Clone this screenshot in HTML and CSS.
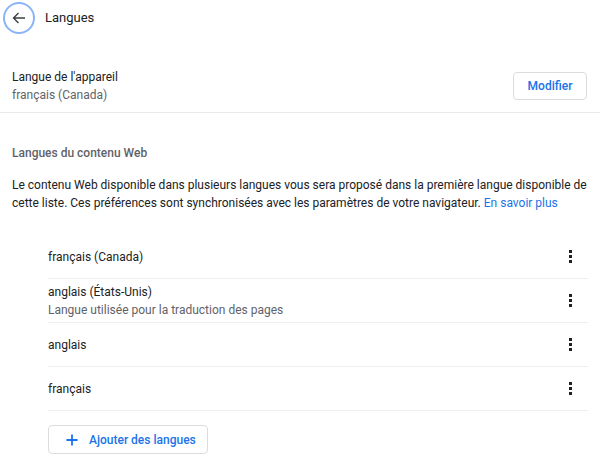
FILE: index.html
```html
<!DOCTYPE html>
<html lang="fr">

<head>
    <meta charset="UTF-8">
    <meta name="viewport" content="width=device-width, initial-scale=1.0">
    <title>Langues</title>
    <link rel="stylesheet" href="styles.css">
</head>

<body>
    <div class="header">
        <button class="backBtn" aria-label="Retour">
            <svg width="16" height="16" viewBox="0 0 16 16">
                <path d="M14 8H2.5M7.5 3L2.5 8l5 5" fill="none" stroke="#3c4043" stroke-width="1.4"></path>
            </svg>
        </button>
        <span class="title">Langues</span>
    </div>

    <div class="deviceRow">
        <div class="deviceText">
            <div class="primary">Langue de l'appareil</div>
            <div class="secondary">français (Canada)</div>
        </div>
        <button class="btn">Modifier</button>
    </div>

    <div class="section">
        <h2 class="sectionTitle">Langues du contenu Web</h2>
        <p class="desc">
            Le contenu Web disponible dans plusieurs langues vous sera proposé dans la première langue disponible de
            cette liste. Ces préférences sont synchronisées avec les paramètres de votre navigateur.
            <a href="" class="link">En savoir plus</a>
        </p>

        <ul class="langList">
            <li class="langItem">
                <div class="primary">français (Canada)</div>
                <span class="more"><i></i><i></i><i></i></span>
            </li>
            <li class="langItem">
                <div>
                    <div class="primary">anglais (États-Unis)</div>
                    <div class="secondary">Langue utilisée pour la traduction des pages</div>
                </div>
                <span class="more"><i></i><i></i><i></i></span>
            </li>
            <li class="langItem">
                <div class="primary">anglais</div>
                <span class="more"><i></i><i></i><i></i></span>
            </li>
            <li class="langItem">
                <div class="primary">français</div>
                <span class="more"><i></i><i></i><i></i></span>
            </li>
        </ul>

        <button class="btn addBtn">
            <svg class="plus" width="12" height="12" viewBox="0 0 12 12">
                <path d="M6 0.5v11M0.5 6h11" stroke="#1a73e8" stroke-width="1.8"></path>
            </svg>
            <span>Ajouter des langues</span>
        </button>
    </div>
</body>

</html>
```

FILE: styles.css
```css
* {
    box-sizing: border-box;
}

body {
    margin: 0;
    background: #fff;
    font-family: Roboto, "Liberation Sans", sans-serif;
    font-size: 12px;
    color: #202124;
}

.header {
    display: flex;
    align-items: center;
    height: 34px;
    padding: 1px 0 0 3px;
}

.backBtn {
    width: 32px;
    height: 32px;
    border-radius: 50%;
    border: 2px solid #8ab4f8;
    background: #fff;
    display: flex;
    align-items: center;
    justify-content: center;
    padding: 0;
}

.title {
    margin-left: 10px;
    font-size: 13px;
    color: #202124;
}

.deviceRow {
    display: flex;
    align-items: center;
    justify-content: space-between;
    height: 79px;
    padding: 25px 13px 0 12px;
    border-bottom: 1px solid #e8eaed;
}

.primary {
    line-height: 18px;
    color: #202124;
}

.secondary {
    line-height: 18px;
    color: #5f6368;
}

.btn {
    height: 28px;
    padding: 0 14px;
    border: 1px solid #dadce0;
    border-radius: 4px;
    background: #fff;
    color: #1a73e8;
    font-family: inherit;
    font-size: 12px;
    font-weight: 500;
    display: inline-flex;
    align-items: center;
    white-space: nowrap;
}

.deviceRow .btn {
    width: 74px;
    justify-content: center;
}

.section {
    padding: 0 12px;
}

.sectionTitle {
    margin: 0;
    padding-top: 31px;
    font-size: 12px;
    font-weight: 500;
    color: #5f6368;
    line-height: 18px;
}

.desc {
    margin: 14px 0 0;
    line-height: 18px;
    color: #202124;
}

.link {
    color: #1a73e8;
    text-decoration: none;
}

.langList {
    list-style: none;
    margin: 23px 0 0 36px;
    padding: 0;
}

.langItem {
    display: flex;
    align-items: center;
    justify-content: space-between;
    height: 44px;
    border-bottom: 1px solid #eceef0;
}

.more {
    display: flex;
    flex-direction: column;
    gap: 2px;
    margin-right: 16px;
}

.more i {
    width: 3px;
    height: 3px;
    background: #202124;
}

.addBtn {
    margin: 14px 0 0 36px;
    width: 160px;
    height: 29px;
    padding: 0 0 0 17px;
    gap: 11px;
}

.plus {
    flex-shrink: 0;
}
```
